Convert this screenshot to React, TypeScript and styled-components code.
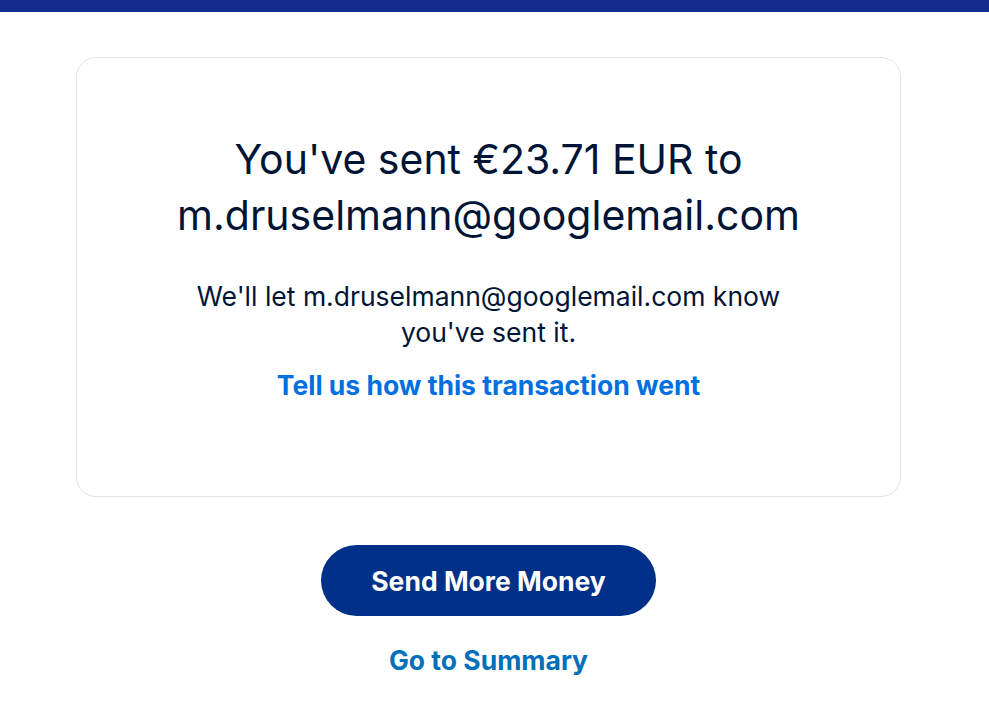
import styled, { createGlobalStyle } from 'styled-components';

const GlobalStyle = createGlobalStyle`
  html, body {
    margin: 0;
    padding: 0;
    background: #ffffff;
  }
  body {
    font-family: Inter, "Noto Sans", "Liberation Sans", sans-serif;
    color: #001435;
  }
`;

const TopBar = styled.div`
  height: 12px;
  background: #142c8e;
`;

const Main = styled.main`
  width: 977px;
  display: flex;
  flex-direction: column;
  align-items: center;
  padding-top: 45px;
`;

const Card = styled.section`
  box-sizing: border-box;
  width: 825px;
  height: 440px;
  border: 1px solid #e3e3e3;
  border-radius: 20px;
  display: flex;
  flex-direction: column;
  align-items: center;
  text-align: center;
  padding: 73px 40px 0;
`;

const Heading = styled.h1`
  margin: 0;
  font-size: 41px;
  line-height: 56px;
  font-weight: 400;
  color: #001435;
  max-width: 700px;
`;

const Message = styled.p`
  margin: 35px 0 0;
  font-size: 26.5px;
  line-height: 36px;
  color: #001435;
  max-width: 640px;
`;

const TextLink = styled.a<{ $tone?: 'bright' | 'deep' }>`
  display: inline-block;
  font-size: 26.5px;
  line-height: 32px;
  font-weight: 700;
  text-decoration: none;
  cursor: pointer;
  color: ${(p) => (p.$tone === 'deep' ? '#0070ba' : '#0070e0')};
`;

const FeedbackRow = styled.div`
  margin-top: 19px;
`;

const PrimaryButton = styled.button`
  margin-top: 48px;
  width: 335px;
  height: 71px;
  border: none;
  border-radius: 36px;
  background: #003087;
  color: #ffffff;
  font-family: inherit;
  font-size: 26.5px;
  font-weight: 700;
  cursor: pointer;
`;

const SummaryRow = styled.div`
  margin-top: 28px;
`;

export default function App() {
  return (
    <>
      <GlobalStyle />
      <TopBar />
      <Main>
        <Card>
          <Heading>You've sent €23.71 EUR to m.druselmann@googlemail.com</Heading>
          <Message>We'll let m.druselmann@googlemail.com know you've sent it.</Message>
          <FeedbackRow>
            <TextLink>Tell us how this transaction went</TextLink>
          </FeedbackRow>
        </Card>
        <PrimaryButton>Send More Money</PrimaryButton>
        <SummaryRow>
          <TextLink $tone="deep">Go to Summary</TextLink>
        </SummaryRow>
      </Main>
    </>
  );
}
